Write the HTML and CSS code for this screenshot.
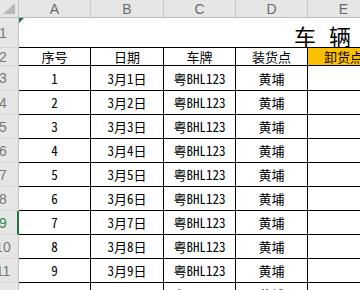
FILE: index.html
```html
<!DOCTYPE html>
<html lang="zh-CN">
<head>
<meta charset="utf-8">
<title>车辆</title>
<link rel="stylesheet" href="styles.css">
</head>
<body>
<div class="sheet">
  <div class="corner"><span class="tri"></span></div>
  <div class="ch">A</div>
  <div class="ch">B</div>
  <div class="ch">C</div>
  <div class="ch">D</div>
  <div class="ch">E</div>

  <div class="rh"><span>1</span></div>
  <div class="title"><span class="mark"></span>车辆</div>

  <div class="rh"><span>2</span></div>
  <div class="c">序号</div>
  <div class="c">日期</div>
  <div class="c">车牌</div>
  <div class="c">装货点</div>
  <div class="c orange">卸货点</div>

  <div class="rh"><span>3</span></div>
  <div class="c">1</div><div class="c">3月1日</div><div class="c">粤BHL123</div><div class="c">黄埔</div><div class="c"></div>

  <div class="rh"><span>4</span></div>
  <div class="c">2</div><div class="c">3月2日</div><div class="c">粤BHL123</div><div class="c">黄埔</div><div class="c"></div>

  <div class="rh"><span>5</span></div>
  <div class="c">3</div><div class="c">3月3日</div><div class="c">粤BHL123</div><div class="c">黄埔</div><div class="c"></div>

  <div class="rh"><span>6</span></div>
  <div class="c">4</div><div class="c">3月4日</div><div class="c">粤BHL123</div><div class="c">黄埔</div><div class="c"></div>

  <div class="rh"><span>7</span></div>
  <div class="c">5</div><div class="c">3月5日</div><div class="c">粤BHL123</div><div class="c">黄埔</div><div class="c"></div>

  <div class="rh"><span>8</span></div>
  <div class="c">6</div><div class="c">3月6日</div><div class="c">粤BHL123</div><div class="c">黄埔</div><div class="c"></div>

  <div class="rh sel"><span>9</span></div>
  <div class="c">7</div><div class="c">3月7日</div><div class="c">粤BHL123</div><div class="c">黄埔</div><div class="c"></div>

  <div class="rh"><span>10</span></div>
  <div class="c">8</div><div class="c">3月8日</div><div class="c">粤BHL123</div><div class="c">黄埔</div><div class="c"></div>

  <div class="rh"><span>11</span></div>
  <div class="c">9</div><div class="c">3月9日</div><div class="c">粤BHL123</div><div class="c">黄埔</div><div class="c"></div>

  <div class="rh"><span>12</span></div>
  <div class="c">10</div><div class="c">3月10日</div><div class="c">粤BHL123</div><div class="c">黄埔</div><div class="c"></div>
</div>
</body>
</html>
```

FILE: styles.css
```css
html, body {
  margin: 0;
  padding: 0;
  background: #fff;
  overflow: hidden;
}

.sheet {
  display: grid;
  grid-template-columns: 19px 72px 73px 72px 72px 72px;
  grid-template-rows: 18px 30px 18px 25px repeat(9, 24px);
  font-family: "Noto Sans Mono CJK SC", "Noto Sans CJK SC", monospace;
  font-size: 13px;
  color: #000;
  width: 380px;
}

.sheet > div {
  box-sizing: border-box;
  min-width: 0;
}

.corner {
  background: #e6e6e6;
  border-right: 1px solid #c4c4c4;
  border-bottom: 1px solid #bcbcbc;
  position: relative;
}

.tri {
  position: absolute;
  left: 3px;
  top: 3px;
  width: 0;
  height: 0;
  border-left: 12px solid transparent;
  border-bottom: 11px solid #b9b9b9;
}

.ch {
  background: #e6e6e6;
  border-right: 1px solid #cacaca;
  border-bottom: 1px solid #bcbcbc;
  display: flex;
  align-items: center;
  justify-content: center;
  font-family: "Liberation Sans", Arial, sans-serif;
  font-size: 14px;
  color: #6a6a6a;
}

.rh {
  background: #e6e6e6;
  border-right: 1px solid #c4c4c4;
  border-bottom: 1px solid #d6d6d6;
  display: flex;
  align-items: center;
  overflow: hidden;
  font-family: "Liberation Sans", Arial, sans-serif;
  font-size: 14px;
  color: #777;
}

.rh span {
  flex: none;
  width: 30px;
  margin-left: -12px;
  text-align: center;
}

.rh.sel {
  color: #3a8a4a;
  border-right: 2px solid #217346;
}

.title {
  grid-column: span 5;
  border-bottom: 1px solid #000;
  position: relative;
  display: flex;
  align-items: center;
  padding-left: 275px;
  padding-top: 5px;
  font-family: "Noto Sans CJK SC", sans-serif;
  font-size: 22px;
  line-height: 22px;
  letter-spacing: 13px;
  white-space: nowrap;
  overflow: hidden;
}

.mark {
  position: absolute;
  left: 0;
  top: 0;
  width: 0;
  height: 0;
  border-top: 5px solid #1e7145;
  border-right: 5px solid transparent;
}

.c {
  border-right: 1px solid #000;
  border-bottom: 1px solid #000;
  display: flex;
  align-items: center;
  justify-content: center;
  white-space: nowrap;
  overflow: hidden;
}

.orange {
  background: #ffc000;
}
```
